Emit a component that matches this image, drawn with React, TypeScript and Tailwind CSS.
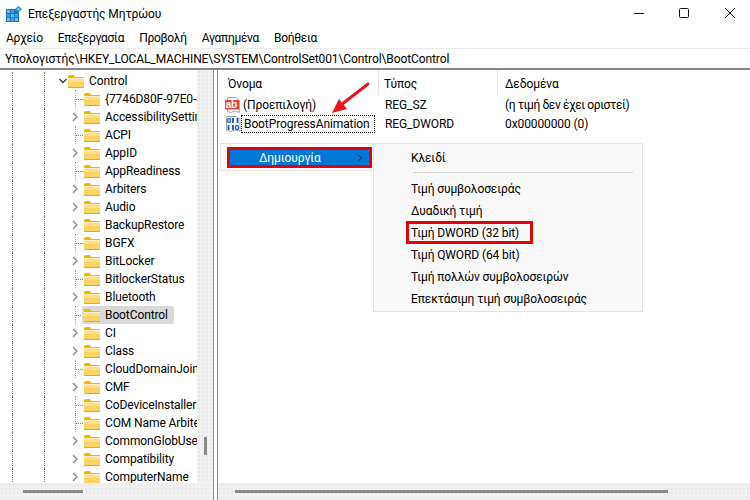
const font = 'font-["Roboto",sans-serif]';
const scrollBg = 'bg-[#f1f1f1] bg-[radial-gradient(circle,#dedede_0.6px,transparent_0.8px)] bg-[length:4px_4px]';

const treeRows = [
  { name: '{7746D80F-97E0-4E', arrow: false },
  { name: 'AccessibilitySetting', arrow: true },
  { name: 'ACPI', arrow: false },
  { name: 'AppID', arrow: true },
  { name: 'AppReadiness', arrow: false },
  { name: 'Arbiters', arrow: true },
  { name: 'Audio', arrow: true },
  { name: 'BackupRestore', arrow: true },
  { name: 'BGFX', arrow: false },
  { name: 'BitLocker', arrow: true },
  { name: 'BitlockerStatus', arrow: false },
  { name: 'Bluetooth', arrow: true },
  { name: 'BootControl', arrow: false, selected: true },
  { name: 'CI', arrow: true },
  { name: 'Class', arrow: true },
  { name: 'CloudDomainJoin', arrow: false },
  { name: 'CMF', arrow: true },
  { name: 'CoDeviceInstallers', arrow: false },
  { name: 'COM Name Arbiter', arrow: false },
  { name: 'CommonGlobUserSettings', arrow: true },
  { name: 'Compatibility', arrow: true },
  { name: 'ComputerName', arrow: true },
];

const submenu = ['Τιμή συμβολοσειράς', 'Δυαδική τιμή', 'Τιμή DWORD (32 bit)', 'Τιμή QWORD (64 bit)', 'Τιμή πολλών συμβολοσειρών', 'Επεκτάσιμη τιμή συμβολοσειράς'];

function Folder() {
  return (
    <svg width="16" height="13" viewBox="0 0 16 13" className="shrink-0">
      <path d="M0 1.5 Q0 0 1.5 0 H5.5 L7.5 2 H16 V4 H0 Z" fill="#f4b400" />
      <rect x="0" y="3" width="16" height="9" fill="#fde08a" />
      <rect x="0" y="3" width="16" height="1" fill="#fff0bd" />
      <rect x="0" y="7" width="16" height="5" fill="#fbd364" />
      <rect x="0" y="12" width="16" height="1" fill="#eaa90c" />
    </svg>
  );
}

function Chevron({ open }: { open?: boolean }) {
  return (
    <svg width="8" height="10" viewBox="0 0 8 10" className="shrink-0">
      <path d={open ? 'M0.5 3 L4 6.5 L7.5 3' : 'M2 1 L6 5 L2 9'} fill="none" stroke={open ? '#333' : '#8a8a8a'} strokeWidth="1.3" />
    </svg>
  );
}

function TreeRow({ name, arrow, selected }: { name: string; arrow: boolean; selected?: boolean }) {
  return (
    <div className="flex h-[18px] items-center">
      <div className="ml-[12px] h-full w-[32px] shrink-0 border-l border-dotted border-[#777]" />
      <div className="h-full w-[15px] shrink-0 border-l border-dotted border-[#777]" />
      <div className="flex h-full w-[23px] shrink-0 items-center pl-[12px]">
        {arrow ? (
          <Chevron />
        ) : (
          <div className="ml-[4px] flex h-full items-center border-l border-dotted border-[#999]">
            <div className="w-[7px] border-t border-dotted border-[#777]" />
          </div>
        )}
      </div>
      <div className={`flex h-[18px] w-[115px] shrink-0 items-center overflow-hidden whitespace-nowrap rounded-[2px] pl-[2px] ${selected ? 'max-w-[92px] bg-[#d9d9d9]' : ''}`}>
        <Folder />
        <span className="ml-[5px]">{name}</span>
      </div>
    </div>
  );
}

function RegSz() {
  return (
    <svg width="16" height="16" viewBox="0 0 16 16" className="shrink-0">
      <path d="M2.5 0.5 H11 L14.5 4 V15.5 L10 14 L6 15.5 L2.5 14.5 Z" fill="#fff" stroke="#a8a8a8" />
      <rect x="0" y="3" width="14" height="9.5" rx="0.5" fill="#e0483a" />
      <text x="0.8" y="11" fontSize="10" fontWeight="700" letterSpacing="-0.3" fill="#fff" fontFamily="Liberation Sans">ab</text>
    </svg>
  );
}

function RegBin() {
  return (
    <svg width="16" height="16" viewBox="0 0 16 16" className="shrink-0">
      <path d="M1.5 0.5 H12 L15 3.5 V15 L10 14 L6 15.5 L1.5 14.5 Z" fill="#fff" stroke="#a8a8a8" />
      <rect x="2.6" y="2.6" width="2.8" height="3.8" rx="1" fill="none" stroke="#1a5cc8" strokeWidth="1.3" />
      <path d="M8 2 V7 M12.5 2 V7 M3.5 9 V14 M8 9 V14" stroke="#1a5cc8" strokeWidth="1.9" />
      <rect x="10.6" y="9.6" width="2.8" height="3.8" rx="1" fill="none" stroke="#1a5cc8" strokeWidth="1.3" />
    </svg>
  );
}

function AppIcon() {
  return (
    <svg width="16" height="16" viewBox="0 0 16 16" className="shrink-0">
      <rect x="0" y="3" width="13" height="13" fill="#1778c4" />
      <rect x="1" y="4" width="3" height="3" fill="#6cbcec" />
      <rect x="5" y="4" width="3" height="3" fill="#3ea0e0" />
      <rect x="1" y="8" width="3" height="3" fill="#3ea0e0" />
      <rect x="5" y="8" width="3" height="3" fill="#6cbcec" />
      <rect x="9" y="8" width="3" height="3" fill="#3ea0e0" />
      <rect x="1" y="12" width="3" height="3" fill="#6cbcec" />
      <rect x="5" y="12" width="3" height="3" fill="#3ea0e0" />
      <rect x="9" y="12" width="3" height="3" fill="#6cbcec" />
      <path d="M12.5 0 L16 3 L12.5 6.5 L9 3 Z" fill="#2d8fd6" />
      <path d="M12.5 2 L14 3 L12.5 4.5 L11 3 Z" fill="#a8dcf8" />
    </svg>
  );
}

export default function App() {
  return (
    <div className={`relative flex h-[500px] w-[750px] flex-col overflow-hidden bg-white text-[12px] leading-none tracking-[-0.1px] text-black ${font}`}>
      {/* title bar */}
      <div className="flex h-[28px] shrink-0 items-center pl-[6px]">
        <AppIcon />
        <span className="ml-[6px]">Επεξεργαστής Μητρώου</span>
        <div className="ml-auto flex items-center gap-[35px] pb-[2px] pr-[15px]">
          <svg width="10" height="10" viewBox="0 0 10 10"><path d="M0 5.5 H10" stroke="#111" /></svg>
          <svg width="10" height="10" viewBox="0 0 10 10"><rect x="0.5" y="0.5" width="9" height="9" rx="1" fill="none" stroke="#111" /></svg>
          <svg width="10" height="10" viewBox="0 0 10 10" className="ml-[1px]"><path d="M0 0 L10 10 M10 0 L0 10" stroke="#111" /></svg>
        </div>
      </div>

      {/* menu bar */}
      <div className="flex h-[21px] shrink-0 items-center gap-[15px] border-b border-[#ececec] pl-[6px] tracking-[-0.3px]">
        <span>Αρχείο</span>
        <span>Επεξεργασία</span>
        <span>Προβολή</span>
        <span>Αγαπημένα</span>
        <span>Βοήθεια</span>
      </div>

      {/* address bar */}
      <div className="flex h-[21px] shrink-0 items-center border-b-2 border-b-[#868686] pl-[5px] whitespace-nowrap">
        Υπολογιστής\HKEY_LOCAL_MACHINE\SYSTEM\ControlSet001\Control\BootControl
      </div>

      {/* panes */}
      <div className="flex min-h-0 flex-1">
        <div className="flex w-[213px] shrink-0 flex-col">
          <div className="flex min-h-0 flex-1">
            <div className="w-[197px] shrink-0 overflow-hidden pt-[2px]">
              <div className="flex h-[18px] items-center">
                <div className="ml-[12px] h-full w-[32px] shrink-0 border-l border-dotted border-[#777]" />
                <div className="h-full w-[15px] shrink-0 border-l border-dotted border-[#777]" />
                <div className="flex w-[9px] shrink-0"><Chevron open /></div>
                <Folder />
                <span className="ml-[5px]">Control</span>
              </div>
              {treeRows.map((row) => (
                <TreeRow key={row.name} {...row} />
              ))}
            </div>
            <div className={`flex w-[16px] shrink-0 justify-center pt-[367px] ${scrollBg}`}>
              <div className="h-[18px] w-[3px] bg-[#8a8a8a]" />
            </div>
          </div>
          <div className={`flex h-[17px] shrink-0 items-center pl-[23px] ${scrollBg}`}>
            <div className="h-[3px] w-[60px] bg-[#8a8a8a]" />
          </div>
        </div>

        <div className="w-[5px] shrink-0 border-x border-[#8a8a8a]" />

        <div className="flex min-w-0 flex-1 flex-col">
          <div className="flex min-h-0 flex-1 flex-col">
            <div className="flex h-[25px] shrink-0 items-center pl-[10px]">
              <span className="mt-[2px] w-[150px]">Όνομα</span>
              <div className="h-full w-[1px] bg-[#e5e5e5]" />
              <span className="ml-[5px] mt-[2px] w-[113px]">Τύπος</span>
              <div className="h-full w-[1px] bg-[#e5e5e5]" />
              <span className="ml-[7px] mt-[2px]">Δεδομένα</span>
            </div>
            <div className="flex h-[19px] shrink-0 items-center pl-[7px]">
              <RegSz />
              <span className="ml-[2px] w-[142px]">(Προεπιλογή)</span>
              <span className="w-[120px]">REG_SZ</span>
              <span className="tracking-[-0.4px]">(η τιμή δεν έχει οριστεί)</span>
            </div>
            <div className="flex h-[19px] shrink-0 items-center pl-[7px]">
              <RegBin />
              <span className="flex h-[18px] w-[134px] shrink-0 items-center border border-dotted border-black pl-[2px]">BootProgressAnimation</span>
              <span className="ml-[10px] w-[120px]">REG_DWORD</span>
              <span>0x00000000 (0)</span>
            </div>
          </div>
          <div className={`flex h-[17px] shrink-0 items-center pl-[17px] ${scrollBg}`}>
            <div className="h-[3px] w-[433px] bg-[#8a8a8a]" />
          </div>
        </div>
      </div>

      {/* context menu */}
      <div className="absolute left-[220px] top-[143px] h-[28px] w-[154px] border border-[#e3e3e3] bg-[#fbfbfb] pl-[7px] pt-[5px]">
        <div className="flex h-[17px] w-[141px] items-center rounded-[3px] bg-[#0078d7] text-white">
          <span className="ml-[31px]">Δημιουργία</span>
          <svg width="6" height="8" viewBox="0 0 6 8" className="ml-auto mr-[6px]"><path d="M1 0.5 L4.5 4 L1 7.5" fill="none" stroke="#10233a" /></svg>
        </div>
      </div>
      <div className="absolute left-[227px] top-[147px] h-[21px] w-[145px] border-[3px] border-[#e6000a]" />

      {/* submenu */}
      <div className="absolute left-[373px] top-[143px] flex h-[169px] w-[270px] flex-col border border-[#e3e3e3] bg-[#f9f9f9] pl-[37px]">
        <div className="flex h-[25px] items-center pt-[3px]">Κλειδί</div>
        <div className="ml-[2px] mr-[9px] mt-[3px] mb-[5px] h-[1px] bg-[#d8d8d8]" />
        {submenu.map((item) => (
          <div key={item} className="flex h-[22px] items-center">{item}</div>
        ))}
      </div>
      <div className="absolute left-[406px] top-[221px] h-[23px] w-[127px] border-[3px] border-[#e6000a]" />

      {/* annotation arrow */}
      <svg width="44" height="36" viewBox="0 0 44 36" className="absolute left-[329px] top-[81px]">
        <path d="M39 3 L12 24" stroke="#e8141c" strokeWidth="3" strokeLinecap="round" />
        <path d="M3 32 L10 18 L18 28 Z" fill="#e8141c" />
      </svg>
    </div>
  );
}
